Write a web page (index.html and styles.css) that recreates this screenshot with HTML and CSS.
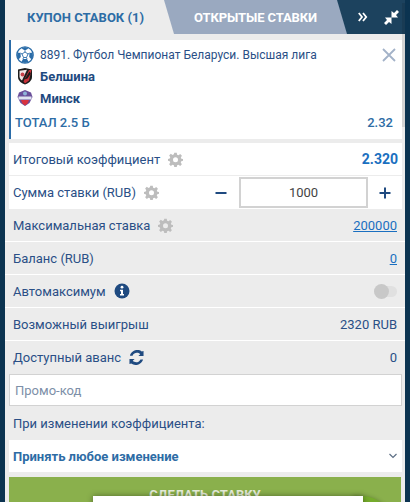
FILE: index.html
```html
<!DOCTYPE html>
<html lang="ru">
<head>
  <meta charset="UTF-8" />
  <meta name="viewport" content="width=device-width, initial-scale=1" />
  <title>Купон ставок</title>
  <link rel="stylesheet" href="styles.css">
</head>
<body>
  <div class="coupon">
    <div class="tabs">
      <div class="tab tab-active">КУПОН СТАВОК (1)</div>
      <div class="tab tab-open">ОТКРЫТЫЕ СТАВКИ</div>
      <div class="tab-icons">
        <svg width="10" height="10" viewBox="0 0 10 10" fill="none" stroke="#fff" stroke-width="1.800"><path d="M0.800 1 4 5 0.800 9M5 1 8.200 5 5 9"/></svg>
        <svg width="15" height="15" viewBox="0 0 15 15" fill="#fff"><path d="M13 0 15 2 12 5 14 7.500H7.500V1L10 3ZM2 15 0 13 3 10 1 7.500H7.500V14L5 12Z"/></svg>
      </div>
    </div>

    <div class="bet-card">
      <div class="bet-league">
        <svg class="bet-icon" width="18" height="18" viewBox="0 0 18 18"><circle cx="9" cy="9" r="8.200" fill="#fff" stroke="#2a6ca8" stroke-width="1.300"/><path d="M9 1 12.500 2.500 9 4.500 5.500 2.500ZM1.500 6.500 4.500 7 4.800 11 2.500 13.500 1 10.500ZM16.500 6.500 13.500 7 13.200 11 15.500 13.500 17 10.500ZM5.500 15.800 7 13H11L12.500 15.800 9 17Z" fill="#2a6ca8"/><path d="M9 4.500V6M4.500 7 6 8M13.500 7 12 8M7 13 7.500 11.500M11 13 10.500 11.500M6 8 7.500 11.500H10.500L12 8 9 6Z" fill="none" stroke="#2a6ca8" stroke-width="0.900"/></svg>
        <span>8891. Футбол Чемпионат Беларуси. Высшая лига</span>
        <svg class="bet-close" width="14" height="14" viewBox="0 0 14 14" stroke="#a3b2c8" stroke-width="1.800"><path d="M1 1 13 13M13 1 1 13"/></svg>
      </div>
      <div class="bet-team">
        <svg class="bet-icon" width="18" height="18" viewBox="0 0 18 18"><path d="M2 2.500 9 1 16 2.500V10C16 14 12 16.500 9 17.500 6 16.500 2 14 2 10Z" fill="#1c1c1c"/><path d="M3.500 3.800 11 2.800 6 13.500C4.500 12.500 3.500 11 3.500 9.500Z" fill="#f1e6e6"/><circle cx="6.500" cy="7.500" r="1.900" fill="#c8414a"/><path d="M15.500 3 13 3 7.500 14.500 9 16.500 13 13.500Z" fill="#c8323a"/><path d="M13.500 4.500 8.500 12.500 11.500 11.500 14.800 6.500Z" fill="#1c1c1c"/></svg>
        <span>Белшина</span>
      </div>
      <div class="bet-team">
        <svg class="bet-icon" width="18" height="18" viewBox="0 0 18 18"><path d="M9 1 15 3.500 16.500 8 13.500 14 9 17 4.500 14 1.500 8 3 3.500Z" fill="#6a4f9a"/><path d="M5 11H13L11.500 14.500 9 16.500 6.500 14.500Z" fill="#d8323f"/><rect x="2.500" y="7.500" width="13" height="3" fill="#dfe3f0"/><circle cx="9" cy="4.500" r="2" fill="#8fb4d8"/></svg>
        <span>Минск</span>
      </div>
      <div class="bet-total">
        <span>ТОТАЛ 2.5 Б</span>
        <span>2.32</span>
      </div>
    </div>

    <div class="rows-white">
      <div class="row">
        <div class="row-label">Итоговый коэффициент <svg class="gear" width="15" height="15" viewBox="0 0 24 24"><use href="#gear-icon"/></svg></div>
        <div class="coef">2.320</div>
      </div>
      <div class="row row-stake">
        <div class="row-label">Сумма ставки (RUB) <svg class="gear" width="15" height="15" viewBox="0 0 24 24"><use href="#gear-icon"/></svg></div>
        <div class="stake">
          <svg class="stake-btn" width="12" height="12" viewBox="0 0 12 12"><rect x="0.500" y="5" width="11" height="2" fill="#1f4a80"/></svg>
          <div class="stake-input">1000</div>
          <svg class="stake-btn" width="12" height="12" viewBox="0 0 12 12" fill="#1f4a80"><rect x="0.500" y="5" width="11" height="2"/><rect x="5" y="0.500" width="2" height="11"/></svg>
        </div>
      </div>
    </div>

    <div class="row row-gray">
      <div class="row-label">Максимальная ставка <svg class="gear" width="15" height="15" viewBox="0 0 24 24"><use href="#gear-icon"/></svg></div>
      <a class="row-link" href="#">200000</a>
    </div>
    <div class="row row-gray">
      <div class="row-label">Баланс (RUB)</div>
      <a class="row-link" href="#">0</a>
    </div>
    <div class="row row-gray">
      <div class="row-label">Автомаксимум
        <svg width="16" height="16" viewBox="0 0 16 16"><circle cx="8" cy="8" r="7.500" fill="#1f4a80"/><circle cx="8" cy="4.200" r="1.400" fill="#fff"/><path d="M6 6.700H9V11H10V12.500H6V11H7V8.200H6Z" fill="#fff"/></svg>
      </div>
      <div class="toggle"><div class="toggle-knob"></div></div>
    </div>
    <div class="row row-gray">
      <div class="row-label">Возможный выигрыш</div>
      <div class="row-value">2320 RUB</div>
    </div>
    <div class="row row-gray row-last">
      <div class="row-label">Доступный аванс
        <svg width="15" height="15" viewBox="0 0 16 16" fill="#1f4a80"><path d="M13.600 1.500 15.500 1V6.500H10L12 4.500C9.500 2 5.500 2.500 3.800 6H1C2.500 0.500 9.500 -1.500 13.600 1.500ZM2.400 14.500 0.500 15V9.500H6L4 11.500C6.500 14 10.500 13.500 12.200 10H15C13.500 15.500 6.500 17.500 2.400 14.500Z"/></svg>
      </div>
      <div class="row-value">0</div>
    </div>

    <div class="promo">Промо-код</div>
    <div class="odds-label">При изменении коэффициента:</div>
    <div class="odds-select">
      <span>Принять любое изменение</span>
      <svg width="8" height="6" viewBox="0 0 8 6" fill="none" stroke="#5d6f85" stroke-width="1.200"><path d="M0.500 1 4 4.500 7.500 1"/></svg>
    </div>

    <div class="submit">
      <div class="submit-text">СДЕЛАТЬ СТАВКУ</div>
      <div class="submit-blob"></div>
      <div class="submit-popup"></div>
    </div>

    <div class="scrollbar"></div>
  </div>

  <svg class="sprite" width="0" height="0">
    <symbol id="gear-icon" viewBox="0 0 24 24">
      <path fill="#bdbdbd" fill-rule="evenodd" d="M10 1H14L14.600 4.200 16.800 5.100 19.500 3.300 22.300 6 20.500 8.700 21.400 10.900 24 11V14L21.300 14.600 20.400 16.800 22.200 19.500 19.500 22.200 16.800 20.400 14.600 21.300 14 24H10L9.400 21.300 7.200 20.400 4.500 22.200 1.800 19.500 3.600 16.800 2.700 14.600 0 14V11L2.700 10.400 3.600 8.200 1.800 5.500 4.500 2.800 7.200 4.600 9.400 3.700ZM12 8.500A4 4 0 1 0 12 16.500 4 4 0 1 0 12 8.500Z"/>
    </symbol>
  </svg>
</body>
</html>
```

FILE: styles.css
```css
* {
  box-sizing: border-box;
}
html, body {
  height: 100%;
}
body {
  margin: 0;
  background: #ececec;
  font-family: Roboto, "Liberation Sans", sans-serif;
  font-size: 13px;
  color: #2a4f86;
  overflow: hidden;
}
.sprite {
  position: absolute;
}
.coupon {
  position: relative;
  height: 502px;
  overflow: hidden;
  border-left: 5px solid #0b3350;
  border-right: 5px solid #0b3350;
  background: #ececec;
}
.scrollbar {
  position: absolute;
  top: 3px;
  right: 0;
  width: 3px;
  height: 124px;
  background: rgba(0, 0, 0, 0.1);
}
.tabs {
  display: flex;
  height: 34px;
  background: #1c425e;
  font-weight: 700;
  font-size: 13px;
}
.tab {
  display: flex;
  align-items: center;
  height: 34px;
}
.tab-active {
  width: 169px;
  padding-left: 22px;
  background: #ececec;
  color: #2d6ca5;
}
.tab-open {
  width: 183px;
  margin-left: -10px;
  padding-left: 30px;
  background: #9aa9c0;
  color: #fff;
  letter-spacing: -0.1px;
  clip-path: polygon(0 0, 173px 0, 100% 100%, 10px 100%);
}
.tab-icons {
  display: flex;
  flex: 1;
  align-items: center;
  gap: 16px;
  padding-left: 11px;
}
.bet-card {
  height: 99px;
  margin: 6px 3px 4px 4px;
  padding: 5px 6px 0 4px;
  border-left: 2px solid #2a6ca8;
  background: #fff;
}
.bet-league {
  display: flex;
  align-items: center;
  gap: 6px;
  height: 20px;
  font-size: 12px;
}
.bet-close {
  margin-left: auto;
}
.bet-team {
  display: flex;
  align-items: center;
  gap: 6px;
  height: 22px;
  font-size: 13px;
  font-weight: 700;
  color: #1f4a80;
}
.bet-icon {
  flex: none;
  margin-left: 1px;
}
.bet-total {
  display: flex;
  justify-content: space-between;
  height: 26px;
  padding: 6px 3px 0 0;
  font-size: 13px;
  font-weight: 500;
  color: #2d6ca5;
}
.rows-white {
  margin: 0 3px 0 4px;
  background: #fff;
}
.row {
  display: flex;
  align-items: center;
  justify-content: space-between;
  height: 33px;
  padding: 0 4px;
  border-bottom: 1px solid #ececec;
}
.row-gray {
  padding: 0 8px;
  border-bottom: 1px solid #fff;
}
.row-last {
  border-bottom: none;
}
.row-stake {
  padding-right: 0;
  border-bottom: none;
}
.row-label {
  display: flex;
  align-items: center;
  gap: 8px;
  white-space: nowrap;
}
.coef {
  font-size: 14px;
  font-weight: 700;
  color: #1a6fc0;
}
.stake {
  display: flex;
  align-items: center;
  width: 193px;
  height: 33px;
  padding-left: 6px;
}
.stake-btn {
  flex: none;
}
.stake-input {
  display: flex;
  align-items: center;
  justify-content: center;
  width: 129px;
  height: 31px;
  margin: 0 11px 0 12px;
  border: 2px solid #d2d2d2;
  color: #444;
  font-size: 13px;
}
.row-link {
  color: #1a6fc0;
}
.toggle {
  position: relative;
  width: 23px;
  height: 11px;
  border-radius: 6px;
  background: #e0e0e0;
}
.toggle-knob {
  position: absolute;
  top: -2px;
  left: 0;
  width: 15px;
  height: 15px;
  border-radius: 50%;
  background: #c8c8c8;
}
.promo {
  display: flex;
  align-items: center;
  height: 32px;
  margin: 0 3px 0 4px;
  padding-left: 5px;
  border: 1px solid #d2d2d2;
  background: #fff;
  color: #7d8fa8;
}
.odds-label {
  display: flex;
  align-items: center;
  height: 34px;
  padding-left: 8px;
}
.odds-select {
  display: flex;
  align-items: center;
  justify-content: space-between;
  height: 32px;
  margin: 0 3px 0 4px;
  padding: 0 5px 0 4px;
  background: #fff;
  color: #2d6ca5;
  font-weight: 700;
}
.submit {
  position: relative;
  height: 40px;
  margin: 5px 4px 0 4px;
  padding-top: 10px;
  background: #8ab04c;
  color: #e6ecdb;
  font-weight: 700;
  text-align: center;
}
.submit-blob {
  position: absolute;
  top: 19px;
  left: 344px;
  width: 39px;
  height: 30px;
  border-top-right-radius: 30px;
  background: #75ab2c;
  box-shadow: 0 0 4px rgba(0, 0, 0, 0.25);
}
.submit-popup {
  position: absolute;
  top: 19px;
  left: 84px;
  width: 270px;
  height: 30px;
  background: #fff;
  box-shadow: 0 0 6px rgba(0, 0, 0, 0.4);
}
```
